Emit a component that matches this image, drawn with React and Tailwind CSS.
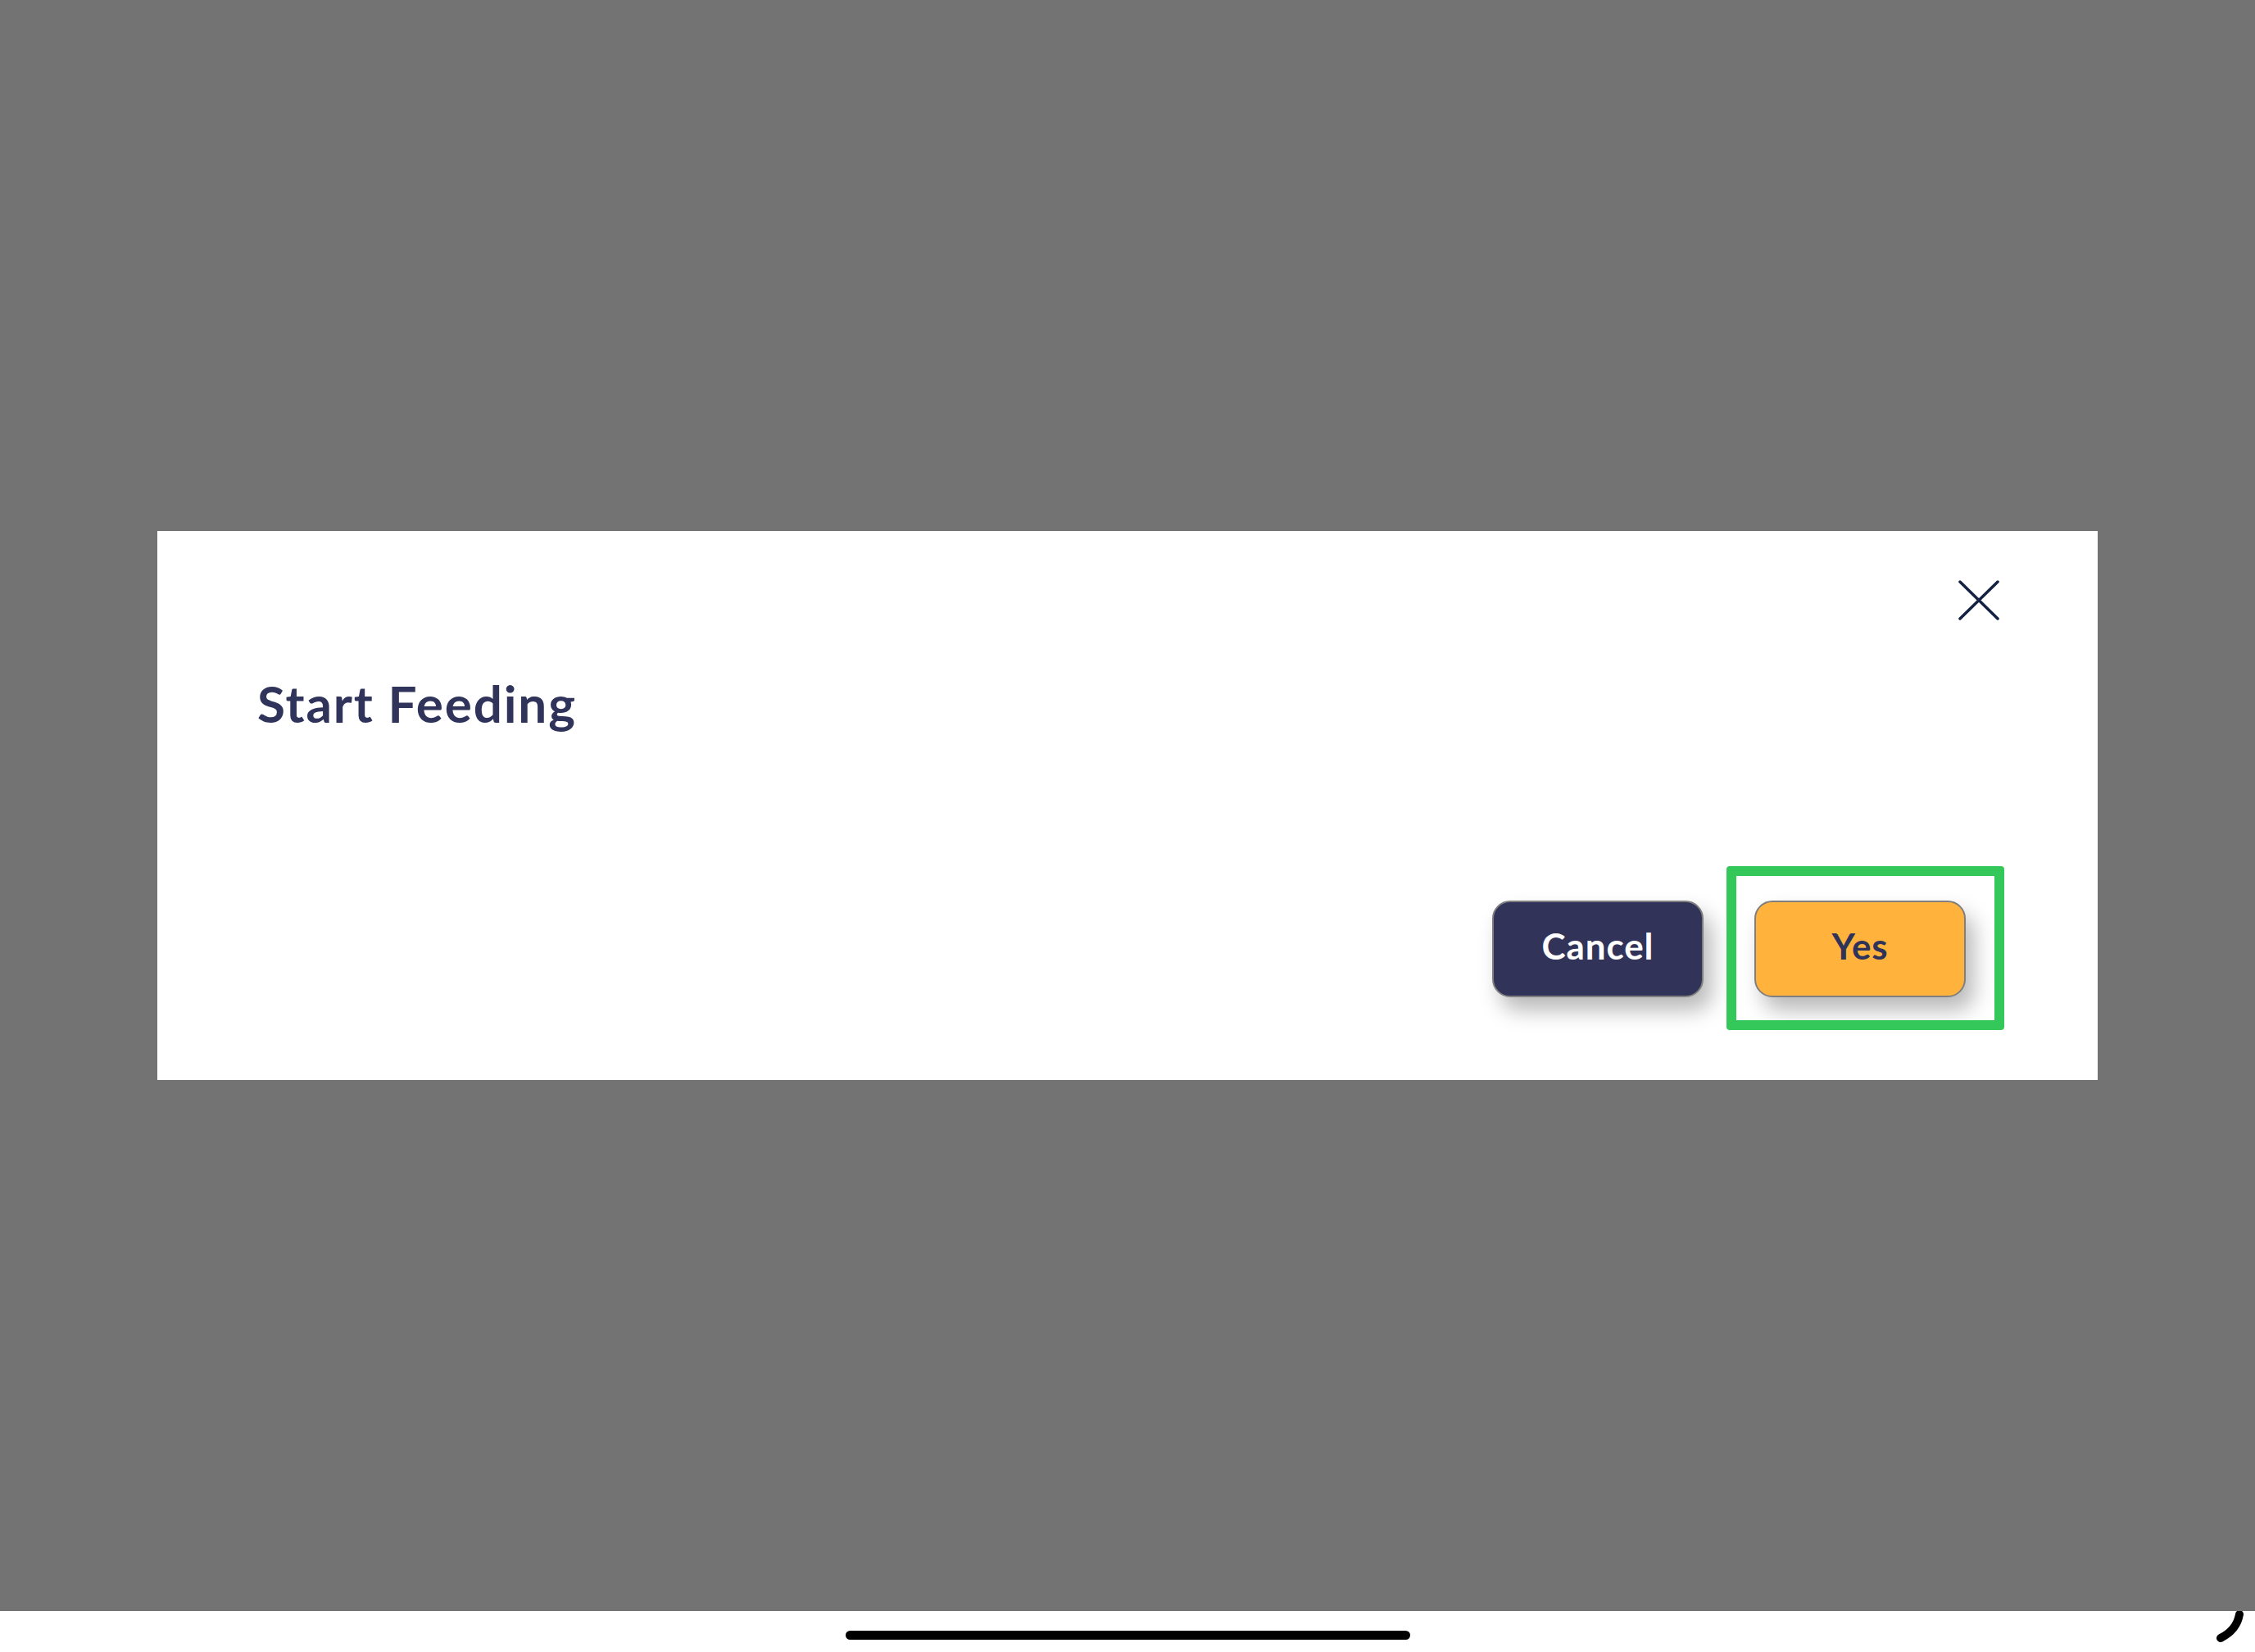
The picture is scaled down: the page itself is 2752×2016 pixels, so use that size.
import React from "react";

const font = { fontFamily: '"Lato", "Open Sans", sans-serif' };

function CloseIcon() {
  return (
    <svg width="50" height="49" viewBox="0 0 50 49" fill="none">
      <path d="M2 2 L48 47 M48 2 L2 47" stroke="#132142" strokeWidth="3.5" strokeLinecap="round" />
    </svg>
  );
}

function ModalButton({ label, variant }) {
  const styles =
    variant === "primary"
      ? "bg-[#FFB33D] text-[#2f3359]"
      : "bg-[#323359] text-white";
  return (
    <button
      className={`w-[258px] h-[118px] rounded-[22px] border-2 border-[#7f7f7f] text-[44px] font-bold leading-none tracking-[0.02em] pb-[8px] shadow-[10px_16px_26px_rgba(0,0,0,0.28)] flex items-center justify-center ${styles}`}
    >
      {label}
    </button>
  );
}

export default function App() {
  return (
    <div className="w-[2752px] h-[2016px] flex flex-col bg-white overflow-hidden" style={font}>
      {/* dimmed backdrop */}
      <div className="h-[1966px] bg-[#737373] flex items-center justify-center">
        <div className="relative w-[2368px] h-[670px] bg-white flex flex-col">
          <div className="flex justify-end pt-[60px] pr-[120px]">
            <CloseIcon />
          </div>

          <h2 className="mt-[70px] pl-[122px] text-[62px] font-bold leading-none tracking-[0.03em] text-[#30345a]">
            Start Feeding
          </h2>

          <div className="flex-1" />

          <div className="flex justify-end gap-[62px] pr-[161px] pb-[101px]">
            <ModalButton label="Cancel" />
            <ModalButton label="Yes" variant="primary" />
          </div>

          {/* highlight box */}
          <div className="absolute left-[1915px] top-[409px] w-[339px] h-[200px] border-[12px] border-[#34C759] rounded-[4px]" />
        </div>
      </div>

      {/* home indicator strip */}
      <div className="relative flex-1 flex justify-center">
        <div className="mt-[24px] w-[689px] h-[11px] rounded-full bg-black" />
        <svg className="absolute right-[14px] top-0" width="34" height="38" viewBox="0 0 34 38" fill="none">
          <path d="M29 4 C27 16 20 26 6 33" stroke="#000" strokeWidth="10" strokeLinecap="round" />
        </svg>
      </div>
    </div>
  );
}
